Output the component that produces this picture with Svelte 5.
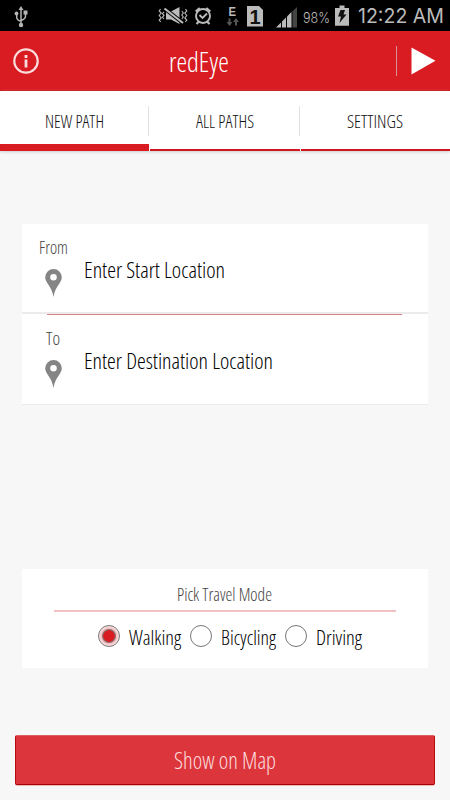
<script>
  const tabs = [
    { label: 'NEW PATH', width: 59, active: true },
    { label: 'ALL PATHS', width: 58 },
    { label: 'SETTINGS', width: 56 }
  ];
  const fields = [
    { title: 'From', titleWidth: 29, hint: 'Enter Start Location', width: 141 },
    { title: 'To', titleWidth: 14, hint: 'Enter Destination Location', width: 189 }
  ];
  const modes = [
    { label: 'Walking', width: 52, cell: 91 },
    { label: 'Bicycling', width: 55, cell: 94 },
    { label: 'Driving', width: 46, cell: 80 }
  ];
  let selected = $state('Walking');
</script>

{#snippet label(text, width, size)}
  <svg class="label" {width} height="30" style="font-size: {size}px">
    <text x="0" y="22" textLength={width} lengthAdjust="spacingAndGlyphs">{text}</text>
  </svg>
{/snippet}

<div class="app">
  <div class="status">
    <svg class="usb" width="14" height="22" viewBox="0 0 14 22" fill="none" stroke="#b5b5b5" stroke-width="1.5">
      <path d="M7 3V20M2.7 8v3.2Q2.7 14 7 15.2M11.5 7v3.3Q11.500 13 7 14.500" />
      <path d="M7 0l2.5 4h-5z" fill="#b5b5b5" stroke="none" />
      <circle cx="2.5" cy="7.5" r="1.9" fill="#b5b5b5" stroke="none" />
      <path d="M9.500 4.500h4v4h-4z" fill="#b5b5b5" stroke="none" />
      <circle cx="7" cy="19" r="2.200" fill="#b5b5b5" stroke="none" />
    </svg>
    <svg class="tray" width="189" height="31" viewBox="158 0 189 31" fill="none" stroke="#bbb" stroke-width="1.4">
      <path d="M160.500 9l-1.300 2 2 2-2 2.500 2 2.500-2 2 1.500 2M164 12l-1.500 1.500 1.500 1.800-1.500 2 1.500 1.700M185.500 9l1.300 2-2 2 2 2.500-2 2.500 2 2-1.500 2M181.800 11l1.500 2-1.500 2 1.500 2-1.500 2" stroke-width="1.100" />
      <path d="M166 11.500h5l8.500-4.500v17l-8.500-4.500h-5z" fill="#bbb" stroke="none" />
      <path d="M164.500 8.500L183 23" stroke="#000" stroke-width="4" />
      <path d="M164.500 8.500L183 23" stroke-width="2.200" />
      <circle cx="203" cy="16" r="7" stroke-width="1.900" />
      <path d="M195.700 11.500l4-3.500M210.300 11.500l-4-3.500M199 21.500l-2.500 2.500M207 21.500l2.500 2.500" stroke-width="2.200" />
      <path d="M199.500 15l3 3 4.500-4.500" stroke-width="1.900" />
      <path d="M229.500 18.500v6M236 19.500v6" stroke="#555" stroke-width="2" />
      <path d="M226.500 22h6l-3 4zM233 22h6l-3-4z" fill="#555" stroke="none" />
      <path d="M247 6h12l4 4v16.500h-16z" fill="#bbb" stroke="none" />
      <path d="M276 27.500l5-5v5zM282 21.500l4-4v10h-4z" fill="#bbb" stroke="none" />
      <path d="M287 16.500l4.500-4.500v15.500H287z" fill="#bbb" stroke="none" />
      <path d="M292.500 11.500l4.500-4.500v20.500h-4.500z" fill="#444" stroke="none" />
      <path d="M335 8h4.500V5.500h5V8h4.500v17.700h-14z" fill="#bbb" stroke="none" />
      <path d="M340.500 10h4.500l-1.500 4.500h3l-7 8.500 1.500-6.500h-3z" fill="#111" stroke="none" />
      <g stroke="none" fill="#bbb" font-family="Liberation Sans, sans-serif">
        <text x="228.500" y="16" font-size="12.500" font-weight="700" textLength="7.500" lengthAdjust="spacingAndGlyphs">E</text>
        <text x="249.500" y="23.500" font-size="20" font-weight="700" fill="#111">1</text>
        <text x="303" y="22.500" font-size="14.500" font-family="Inter, sans-serif" font-weight="350" textLength="27" lengthAdjust="spacingAndGlyphs">98%</text>
      </g>
    </svg>
    <svg class="clock" width="88" height="31">
      <text x="0" y="23" textLength="86" lengthAdjust="spacingAndGlyphs">12:22 AM</text>
    </svg>
  </div>

  <header>
    <svg class="info" width="26" height="26" viewBox="0 0 26 26" fill="none" stroke="#fbdcdd" stroke-width="2.200">
      <circle cx="13" cy="13" r="11.700" />
      <path d="M13 11.500v8M13 7v3" stroke-width="2.800" />
    </svg>
    <div class="title">{@render label('redEye', 60, 28)}</div>
    <div class="rule"></div>
    <svg class="play" width="25" height="28"><path d="M0.500 0.500L24.500 13.800 0.500 27.500z" fill="#fff" /></svg>
  </header>

  <nav>
    {#each tabs as tab}
      <div class="tab" class:active={tab.active}>{@render label(tab.label, tab.width, 18)}</div>
    {/each}
  </nav>

  <main>
    <section class="route">
      {#each fields as field}
        <div class="field">
          <div class="side">
            {@render label(field.title, field.titleWidth, 17.5)}
            <svg class="pin" width="17" height="28" viewBox="0 0 17 28">
              <path fill="#858585" fill-rule="evenodd" d="M8.500 0A8.300 8.300 0 0 0 .2 8.300C.2 14 6.500 16.500 8.500 28 10.500 16.500 16.800 14 16.800 8.300A8.300 8.300 0 0 0 8.500 0zM8.500 5a3.300 3.300 0 1 1 0 6.600 3.300 3.300 0 0 1 0-6.600z" />
            </svg>
          </div>
          <div class="hint">{@render label(field.hint, field.width, 22.5)}</div>
        </div>
      {/each}
    </section>

    <section class="travel">
      <div class="heading">{@render label('Pick Travel Mode', 95, 17.5)}</div>
      <div class="modes">
        {#each modes as mode}
          <button class="mode" style="width: {mode.cell}px" onclick={() => (selected = mode.label)}>
            <span class="radio" class:on={selected === mode.label}></span>
            {@render label(mode.label, mode.width, 20)}
          </button>
        {/each}
      </div>
    </section>

    <button class="show">{@render label('Show on Map', 102, 23)}</button>
  </main>
</div>

<style>
  :global(body) { margin: 0; }
  .app {
    width: 450px;
    height: 800px;
    display: flex;
    flex-direction: column;
    overflow: hidden;
    background: #f7f7f7;
    font-family: 'Open Sans', sans-serif;
    font-stretch: 75%;
    font-weight: 300;
  }
  svg { display: block; flex: none; }
  .label { overflow: visible; fill: currentColor; }
  button { border: 0; padding: 0; background: none; font: inherit; font-stretch: inherit; box-sizing: border-box; }
  .status { height: 31px; display: flex; background: #000; }
  .usb { margin: 6px 0 0 14px; }
  .tray { margin-left: 130px; overflow: visible; }
  .clock {
    margin-left: 11px;
    fill: #bbb;
    font-family: Inter, sans-serif;
    font-size: 20px;
    font-weight: 400;
    font-stretch: normal;
    overflow: visible;
  }
  header {
    box-sizing: border-box;
    height: 60px;
    display: flex;
    background: #d91b22;
    border-bottom: 1px solid #c9050a;
    color: #fff;
    font-weight: 350;
  }
  .info { margin: 17px 0 0 13px; }
  .title { margin: 19px 0 0 130px; }
  .rule { width: 1px; height: 30px; margin: 15px 0 0 167px; background: #d89598; }
  .play { margin: 16px 0 0 14px; }
  nav {
    height: 60px;
    display: flex;
    gap: 1px;
    background: #fff;
    color: #111;
    font-weight: 340;
    box-shadow: 0 1px 3px #ccc;
    z-index: 1;
  }
  .tab {
    flex: 1;
    box-sizing: border-box;
    display: flex;
    justify-content: center;
    padding-top: 15px;
    border-bottom: 2px solid #d0161d;
    background: linear-gradient(#e2e2e2, #e2e2e2) right 0 top 15px / 1px 30px no-repeat;
  }
  .tab:last-child { background: none; }
  .tab.active { border-bottom: 7px solid #d91b22; }
  main { flex: 1; display: flex; flex-direction: column; }
  .route { width: 406px; margin: 73px 22px 0; }
  .field {
    box-sizing: border-box;
    height: 90px;
    display: flex;
    background: #fff;
    border-bottom: 2px solid #ebebeb;
    color: #000;
  }
  .field:last-child {
    height: 91px;
    padding-top: 1px;
    border-bottom-width: 1px;
    background: linear-gradient(#d98184, #d98184) 25px 0 / 355px 1px no-repeat #fff;
  }
  .side {
    width: 62px;
    display: flex;
    flex-direction: column;
    align-items: center;
    padding-top: 8px;
    color: #444;
  }
  .pin { margin: 7px 0 0 1px; }
  .hint { padding-top: 32px; }
  .travel {
    box-sizing: border-box;
    width: 406px;
    height: 99px;
    margin: 164px 22px 0;
    padding: 10px 32px 0;
    background: #fff;
  }
  .heading {
    display: flex;
    justify-content: center;
    height: 31px;
    padding-right: 1px;
    border-bottom: 2px solid #f0c2c4;
    color: #444;
  }
  .modes { display: flex; margin: 10px 0 0 44px; gap: 1px; }
  .mode { display: flex; gap: 9px; color: #000; padding-top: 1px; }
  .radio {
    flex: none;
    box-sizing: border-box;
    width: 22px;
    height: 22px;
    margin-top: 2px;
    border: 1px solid #777;
    border-radius: 50%;
    background: #fff;
  }
  .radio.on { background: radial-gradient(circle, #d91b22 5.5px, #777 6px, #a77 6.7px, #f3bfc1 7.5px, #fbe6e7 10px); }
  .show {
    display: flex;
    justify-content: center;
    width: 420px;
    height: 50px;
    margin: 67px 15px 0;
    padding-top: 11px;
    background: #dd353c;
    border: 1px solid #b50b10;
    border-top-color: #df5d61;
    border-bottom-color: #a90004;
    border-radius: 2px;
    box-shadow: 0 1px 0 #e9b9bb;
    color: #fbdcdd;
  }
</style>
